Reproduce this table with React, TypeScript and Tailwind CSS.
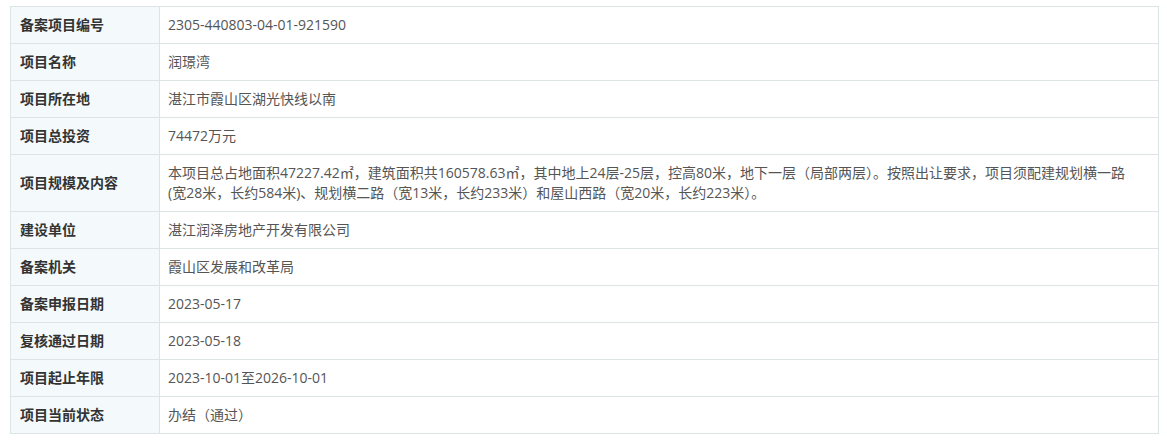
import React from "react";

const rows: [string, React.ReactNode][] = [
  ["备案项目编号", "2305-440803-04-01-921590"],
  ["项目名称", "润璟湾"],
  ["项目所在地", "湛江市霞山区湖光快线以南"],
  ["项目总投资", "74472万元"],
  [
    "项目规模及内容",
    <>
      本项目总占地面积47227.42㎡，建筑面积共160578.63㎡，其中地上24层-25层，控高80米，地下一层（局部两层）。按照出让要求，项目须配建规划横一路
      <br />
      (宽28米，长约584米)、规划横二路（宽13米，长约233米）和屋山西路（宽20米，长约223米）。
    </>,
  ],
  ["建设单位", "湛江润泽房地产开发有限公司"],
  ["备案机关", "霞山区发展和改革局"],
  ["备案申报日期", "2023-05-17"],
  ["复核通过日期", "2023-05-18"],
  ["项目起止年限", "2023-10-01至2026-10-01"],
  ["项目当前状态", "办结（通过）"],
];

export default function App() {
  return (
    <div
      className="bg-white w-[1167px] h-[440px] pt-[6px] pl-[10px]"
      style={{ fontFamily: '"Open Sans", "Noto Sans CJK SC", sans-serif' }}
    >
      <table className="w-[1149px] border-collapse text-[14px] leading-[20px]">
        <tbody>
          {rows.map(([k, v]) => (
            <tr key={k}>
              <td className="w-[149px] border border-[#dde4e6] bg-[#f4fafb] pl-[9px] pr-2 py-2 font-bold text-[#333] align-middle">
                {k}
              </td>
              <td className="border border-[#dde4e6] pl-[8px] pr-3 py-2 text-[#555] align-middle">
                {v}
              </td>
            </tr>
          ))}
        </tbody>
      </table>
    </div>
  );
}
